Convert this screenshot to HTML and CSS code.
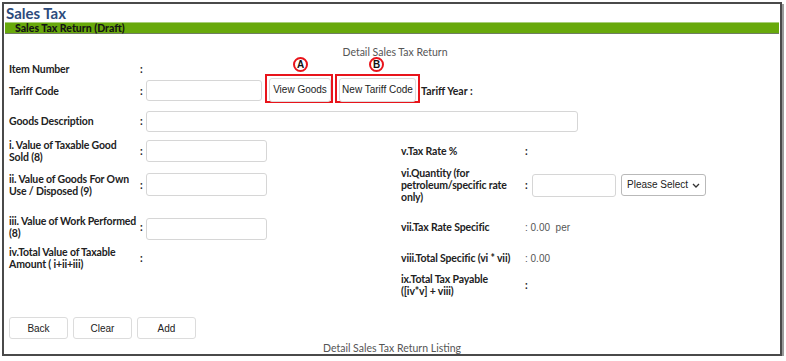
FILE: index.html
```html
<!DOCTYPE html>
<html lang="en">
<head>
    <meta charset="UTF-8">
    <title>Sales Tax</title>
    <link rel="stylesheet" href="styles.css">
</head>
<body>
    <div class="frame">
        <!-- Header -->
        <div class="page-title">Sales Tax</div>
        <div class="section-bar">Sales Tax Return (Draft)</div>

        <div class="sub-title">Detail Sales Tax Return</div>

        <!-- Form -->
        <div class="form-grid">
            <div class="lbl">Item Number</div>
            <div class="colon">:</div>
            <div class="span-rest"></div>

            <div class="lbl">Tariff Code</div>
            <div class="colon">:</div>
            <div class="span-rest tariff-line">
                <input type="text" class="field tariff-field">
                <div class="mark mark-a">
                    <span class="badge">A</span>
                    <button class="btn btn-view">View Goods</button>
                </div>
                <div class="mark mark-b">
                    <span class="badge">B</span>
                    <button class="btn btn-new">New Tariff Code</button>
                </div>
                <span class="tariff-year">Tariff Year :</span>
            </div>

            <div class="lbl">Goods Description</div>
            <div class="colon">:</div>
            <div class="span-rest"><input type="text" class="field desc-field"></div>

            <div class="lbl">i. Value of Taxable Good<br>Sold (8)</div>
            <div class="colon">:</div>
            <div><input type="text" class="field num-field"></div>
            <div class="lbl">v.Tax Rate %</div>
            <div class="colon">:</div>
            <div></div>

            <div class="lbl">ii. Value of Goods For Own<br>Use / Disposed (9)</div>
            <div class="colon">:</div>
            <div><input type="text" class="field num-field tall"></div>
            <div class="lbl">vi.Quantity (for<br>petroleum/specific rate<br>only)</div>
            <div class="colon">:</div>
            <div class="qty-line">
                <input type="text" class="field qty-field">
                <div class="select-wrap">
                    <select class="unit-select">
                        <option>Please Select</option>
                    </select>
                    <svg class="chevron" width="8" height="5" viewBox="0 0 8 5"><path d="M1 1l3 3 3-3" fill="none" stroke="#333" stroke-width="1.3"/></svg>
                </div>
            </div>

            <div class="lbl">iii. Value of Work Performed<br>(8)</div>
            <div class="colon">:</div>
            <div><input type="text" class="field num-field work-field"></div>
            <div class="lbl">vii.Tax Rate Specific</div>
            <div class="colon val">: 0.00&nbsp; per</div>
            <div></div>

            <div class="lbl">iv.Total Value of Taxable<br>Amount ( i+ii+iii)</div>
            <div class="colon">:</div>
            <div></div>
            <div class="lbl">viii.Total Specific (vi * vii)</div>
            <div class="colon val">: 0.00</div>
            <div></div>

            <div></div>
            <div></div>
            <div></div>
            <div class="lbl">ix.Total Tax Payable<br>([iv*v] + viii)</div>
            <div class="colon">:</div>
            <div></div>
        </div>

        <!-- Actions -->
        <div class="actions">
            <button class="btn act">Back</button>
            <button class="btn act">Clear</button>
            <button class="btn act">Add</button>
        </div>

        <div class="listing-title">Detail Sales Tax Return Listing</div>
    </div>
</body>
</html>
```

FILE: styles.css
```css
* {
    margin: 0;
    padding: 0;
    box-sizing: border-box;
}
body {
    background: #fff;
    font-family: Lato, "Open Sans", sans-serif;
    color: #222;
}
/* Outer frame */
.frame {
    margin: 2px 0 0 2px;
    width: 780px;
    height: 354px;
    border: 2px solid #4a4a4a;
    box-shadow: 2px 2px 0 #9a9a9a;
    overflow: hidden;
}
.page-title {
    height: 18px;
    line-height: 19px;
    padding-left: 2px;
    font-size: 15px;
    font-weight: 700;
    color: #2d4b7c;
}
.section-bar {
    margin: 0 1px;
    height: 12px;
    line-height: 11px;
    padding-left: 10px;
    background: #68a90b;
    border-top: 1px solid #a9cf79;
    border-bottom: 1px solid #6f7d62;
    font-size: 10.5px;
    font-weight: 900;
    color: #141414;
}
.sub-title {
    margin-top: 12px;
    height: 13px;
    line-height: 13px;
    text-align: center;
    font-size: 10.5px;
    color: #555;
    padding-left: 6px;
}
/* Form grid */
.form-grid {
    display: grid;
    grid-template-columns: 128px 9px 255px 121px 10px 1fr;
    grid-template-rows: 20px 23px 38px 22px 46px 38px 24px 30px;
    align-items: center;
    padding-left: 5px;
}
.lbl {
    font-size: 10.5px;
    font-weight: 700;
    line-height: 12px;
    letter-spacing: -0.15px;
    white-space: nowrap;
    color: #222;
}
.colon {
    padding-left: 3px;
    font-size: 10.5px;
    font-weight: 700;
}
.colon.val {
    white-space: nowrap;
    font-family: "Liberation Sans", Arial, sans-serif;
    font-weight: 400;
    font-size: 10px;
    color: #555;
}
.span-rest {
    grid-column: 3 / 7;
}
.field {
    display: block;
    height: 22px;
    border: 1px solid #d6d6d6;
    border-radius: 3px;
    background: #fff;
}
.tariff-field {
    width: 116px;
    height: 21px;
}
.desc-field {
    width: 432px;
    height: 21px;
}
.num-field {
    width: 121px;
}
.num-field.tall {
    height: 23px;
    margin-top: -2px;
}
.work-field {
    margin-top: 4px;
}
/* Tariff line with annotated buttons */
.tariff-line {
    display: flex;
    align-items: center;
}
.mark {
    position: relative;
    border: 2px solid #e8141b;
    padding: 1px 0 0 2px;
    height: 29px;
    margin-top: -4px;
}
.mark-a {
    margin-left: 3px;
    width: 68px;
}
.mark-b {
    margin-left: 2px;
    width: 85px;
}
.badge {
    position: absolute;
    top: -19px;
    width: 15px;
    height: 15px;
    border: 2px solid #e8141b;
    border-radius: 50%;
    background: #fff;
    font-family: "Liberation Sans", Arial, sans-serif;
    font-size: 10px;
    font-weight: 700;
    line-height: 11px;
    text-align: center;
    color: #111;
}
.mark-a .badge {
    left: 26px;
}
.mark-b .badge {
    left: 32px;
}
.btn {
    background: #fff;
    border: 1px solid #dcdcdc;
    border-radius: 3px;
    font-family: "Liberation Sans", Arial, sans-serif;
    font-size: 10px;
    color: #222;
    cursor: pointer;
}
.btn-view {
    width: 62px;
    height: 24px;
}
.btn-new {
    width: 77px;
    height: 24px;
}
.tariff-year {
    margin-left: 1px;
    font-size: 10.5px;
    font-weight: 700;
}
/* Quantity */
.qty-line {
    display: flex;
    align-items: center;
    gap: 5px;
}
.qty-field {
    width: 84px;
    height: 23px;
}
.select-wrap {
    position: relative;
    margin-top: -1px;
}
.unit-select {
    display: block;
    appearance: none;
    -webkit-appearance: none;
    width: 85px;
    height: 22px;
    border: 1px solid #b9b9b9;
    border-radius: 3px;
    background: #fff;
    font-family: "Liberation Sans", Arial, sans-serif;
    font-size: 10px;
    color: #222;
    padding-left: 5px;
}
.chevron {
    position: absolute;
    right: 6px;
    top: 9px;
    pointer-events: none;
}
/* Actions */
.actions {
    display: flex;
    gap: 5px;
    padding-left: 5px;
    margin-top: 17px;
}
.act {
    width: 59px;
    height: 22px;
}
.listing-title {
    margin-top: 3px;
    text-align: center;
    font-size: 10.5px;
    color: #555;
}
```
